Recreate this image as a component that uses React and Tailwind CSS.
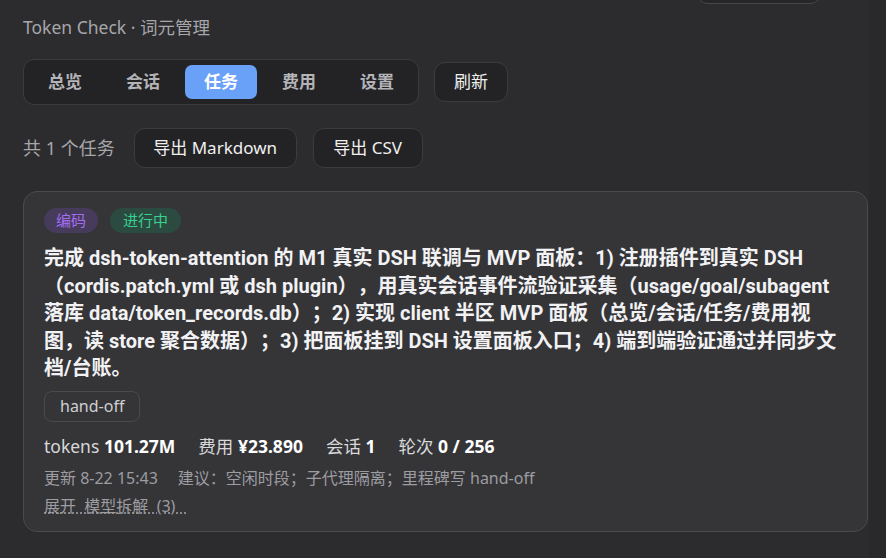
import React, { useState } from 'react'

const tabs = ['总览', '会话', '任务', '费用', '设置']

export default function App() {
  const [active, setActive] = useState('任务')

  return (
    <div
      className="flex h-[558px] w-full overflow-hidden bg-[#29292b] text-[#e8e8ea] [text-spacing-trim:space-all]"
      style={{ fontFamily: '"Noto Sans", "Noto Sans CJK SC", sans-serif' }}
    >
      <div className="w-[869px] shrink-0 bg-[#2c2c2e] pl-[23px] pr-[1px]">
        {/* button from the row above, scrolled mostly out of view */}
        <div className="flex h-[4px] justify-end pr-[46px]">
          <button className="-mt-[36px] h-[40px] w-[126px] rounded-[12px] border border-[#48484b] bg-[#262628]" />
        </div>

        <div className="mt-[11px] text-[17.5px] leading-[24px] text-[#a6a6ab]">Token Check · 词元管理</div>

        <div className="mt-[20px] flex items-center gap-[15px]">
          <div className="flex gap-[6px] rounded-[11px] border border-[#3c3c3f] bg-[#232325] p-[5px]">
            {tabs.map(t => (
              <button
                key={t}
                onClick={() => setActive(t)}
                className={`h-[34px] w-[72px] rounded-[7px] text-[17px] font-bold ${active === t ? 'bg-[#6aa1f8] text-white' : 'text-[#b4b4b8]'}`}
              >
                {t}
              </button>
            ))}
          </div>
          <button className="h-[40px] w-[74px] rounded-[11px] border border-[#3c3c3f] bg-[#232325] text-[17px] text-[#f0f0f0]">
            刷新
          </button>
        </div>

        <div className="mt-[23px] flex items-center">
          <span className="text-[18px] text-[#a6a6ab]">共 1 个任务</span>
          <button className="ml-[19px] h-[40px] w-[163px] rounded-[11px] border border-[#3c3c3f] bg-[#232325] text-[17px] text-[#f0f0f0]">
            导出 Markdown
          </button>
          <button className="ml-[16px] h-[40px] w-[110px] rounded-[11px] border border-[#3c3c3f] bg-[#232325] text-[17px] text-[#f0f0f0]">
            导出 CSV
          </button>
        </div>

        <div className="mt-[23px] rounded-[14px] border border-[#4a4a4d] bg-[#353538] px-[20px] pt-[16px] pb-[13px]">
          <div className="flex gap-[12px]">
            <span className="flex h-[25px] items-center rounded-full bg-[#463b5b] px-[12px] text-[15px] text-[#a56ef2]">编码</span>
            <span className="flex h-[25px] items-center rounded-full bg-[#2c4b40] px-[13px] text-[15px] text-[#38d090]">进行中</span>
          </div>

          <p className="mt-[12px] font-[Roboto,'Noto_Sans_CJK_SC',sans-serif] text-[20px] font-bold leading-[27.5px] text-[#f2f2f4]">
            完成 dsh-token-attention 的 M1 真实 DSH 联调与 MVP 面板：1) 注册插件到真实 DSH（cordis.patch.yml 或 dsh plugin），用真实会话事件流验证采集（usage/goal/subagent 落库 data/token_records.db）；2) 实现 client 半区 MVP 面板（总览/会话/任务/费用视图，读 store 聚合数据）；3) 把面板挂到 DSH 设置面板入口；4) 端到端验证通过并同步文档/台账。
          </p>

          <div className="mt-[8px] flex">
            <span className="flex h-[31px] items-center rounded-[8px] border border-[#4a4a4e] px-[15px] text-[16px] text-[#cfcfd2]">hand-off</span>
          </div>

          <div className="mt-[12px] flex gap-[23px] text-[17.5px] leading-[24px] text-[#d8d8da]">
            <span>tokens <b className="text-white">101.27M</b></span>
            <span>费用 <b className="text-white">¥23.890</b></span>
            <span>会话 <b className="text-white">1</b></span>
            <span>轮次 <b className="text-white">0 / 256</b></span>
          </div>

          <div className="mt-[8px] flex gap-[20px] text-[16px] leading-[24px] text-[#9c9ca1]">
            <span>更新 8-22 15:43</span>
            <span>建议：空闲时段；子代理隔离；里程碑写 hand-off</span>
          </div>

          <div className="mt-[4px] text-[16px] leading-[24px] text-[#9c9ca1] underline decoration-dotted underline-offset-[1px]">
            展开&nbsp; 模型拆解&nbsp; (3)&nbsp;&nbsp;&nbsp;
          </div>
        </div>
      </div>
      <div className="flex-1 bg-[#29292b]" />
    </div>
  )
}
